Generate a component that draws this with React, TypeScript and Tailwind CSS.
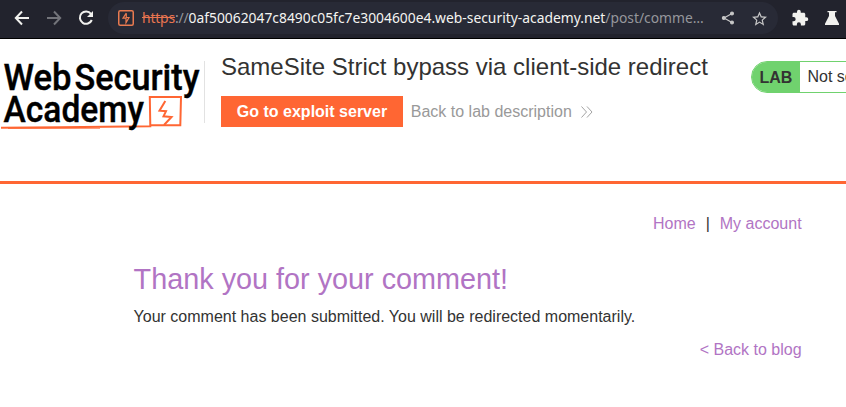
import React from "react";

function BrowserBar() {
  return (
    <div className="flex h-[39px] w-full items-start border-b border-black bg-[#22232d]">
      <div className="flex h-9 w-[108px] shrink-0 items-center pl-[14px] text-[#f1f1ee]">
        <svg className="h-4 w-4 shrink-0" viewBox="0 0 16 16" fill="none" stroke="currentColor" strokeWidth="2">
          <path d="M15 8H2.5M8 1.5 1.8 8 8 14.5" />
        </svg>
        <svg className="ml-4 h-4 w-4 shrink-0 text-[#73747a]" viewBox="0 0 16 16" fill="none" stroke="currentColor" strokeWidth="2">
          <path d="M1 8h12.5M8 1.5 14.2 8 8 14.5" />
        </svg>
        <svg className="ml-4 h-4 w-4 shrink-0" viewBox="0 0 16 16" fill="none" stroke="currentColor" strokeWidth="2">
          <path d="M13 3.8A6.2 6.2 0 1 0 13.8 10" />
          <path d="M15 1v6H9z" fill="currentColor" stroke="none" />
        </svg>
      </div>
      <div className="mt-[2px] flex h-8 w-[670px] shrink-0 items-center rounded-full bg-[#282a36] pl-[10px]">
        <svg className="h-4 w-4 shrink-0" viewBox="0 0 16 16" fill="none" stroke="#e97a50" strokeWidth="1.5">
          <rect x="0.75" y="0.75" width="14.5" height="14.5" rx="1.5" />
          <path d="M8.300 3.200 5 8.200h3M8.300 3.200v4.300M8 7.500h3L8 12.800V8" strokeWidth="1.2" />
        </svg>
        <div className="ml-2 w-[566px] shrink-0 whitespace-nowrap font-['Noto_Sans',sans-serif] text-[13.85px] leading-5 text-[#f4f4f1]">
          <span className="tracking-[-0.15px] text-[#e97550] line-through">https</span>
          <span className="tracking-[-0.15px] text-[#96979c]">://</span>0af50062047c8490c05fc7e3004600e4.web-security-academy.net
          <span className="text-[#96979c]">/post/comme…</span>
        </div>
        <svg className="ml-[13px] h-[14px] w-[14px] shrink-0" viewBox="0 0 14 14" fill="#c7c7c7" stroke="#c7c7c7" strokeWidth="1.2">
          <path d="M11 2.5 3 7l8 4.5" fill="none" />
          <circle cx="11" cy="2.4" r="1.4" />
          <circle cx="2.8" cy="7" r="1.4" />
          <circle cx="11" cy="11.6" r="1.4" />
        </svg>
        <svg className="ml-[17px] h-[15px] w-[15px] shrink-0" viewBox="2 1.5 20 20" fill="#c7c7c7">
          <path d="m22 9.240-7.190-.620L12 2 9.190 8.630 2 9.240l5.460 4.730L5.820 21 12 17.270 18.180 21l-1.630-7.030L22 9.240zM12 15.400l-3.760 2.270 1-4.280-3.320-2.880 4.380-.380L12 6.100l1.710 4.040 4.380.380-3.320 2.880 1 4.280L12 15.400z" />
        </svg>
      </div>
      <svg className="ml-[13px] mt-[9px] h-[18px] w-[18px] shrink-0" viewBox="0 0 24 24" fill="#f1f1ee">
        <path d="M20.500 11H19V7c0-1.100-.900-2-2-2h-4V3.500a2.500 2.500 0 0 0-5 0V5H4c-1.100 0-2 .900-2 2v3.800h1.500a2.700 2.700 0 0 1 0 5.400H2V20c0 1.100.900 2 2 2h3.800v-1.500a2.700 2.700 0 0 1 5.400 0V22H17c1.100 0 2-.900 2-2v-4h1.500a2.500 2.500 0 0 0 0-5z" />
      </svg>
      <svg className="ml-[16px] mt-[11px] h-[14px] w-[14px] shrink-0" viewBox="0 0 14 14" fill="#f1f1ee">
        <path d="M2.500 0h9v1.200h-1.500V5l4 7.800V14H0v-1.200L4 5V1.200H2.500z" />
      </svg>
    </div>
  );
}

function Logo() {
  return (
    <svg className="h-[82px] w-[204px] shrink-0" viewBox="0 53 204 82">
      <g fill="none" stroke="#ff6633">
        <path d="M1 127.800 60 127.300 150.300 126.300 149.800 97H181L180.300 125.200H150" strokeWidth="2" />
        <path d="M8 128.500 100 128.300" strokeWidth=".8" />
        <path d="M165.300 101 159.500 110.700 166 111.200 163.500 116.300 171.500 117 164 125" strokeWidth="2" />
      </g>
      <g fill="#000" stroke="#000" strokeWidth=".4" className="font-['Roboto',sans-serif] text-[36.5px] font-medium">
        <text x="3.500" y="89.500" textLength="68" lengthAdjust="spacingAndGlyphs">Web</text>
        <text x="74.500" y="89.500" textLength="125" lengthAdjust="spacingAndGlyphs">Security</text>
        <text x="3.500" y="122" textLength="140.500" lengthAdjust="spacingAndGlyphs">Academy</text>
      </g>
    </svg>
  );
}

export default function App() {
  return (
    <div className="h-[407px] w-[846px] overflow-hidden bg-white font-['Liberation_Sans',Arial,sans-serif] text-base text-[#333332]">
      <BrowserBar />
      <header className="flex h-[145px] items-start border-b-[3px] border-[#ff6633] pt-[14px]">
        <Logo />
        <div className="mt-[8px] h-[62px] w-px shrink-0 bg-[#e2e2e2]" />
        <div className="ml-4 w-[530px] shrink-0">
          <h1 className="whitespace-nowrap text-[24px] leading-7">SameSite Strict bypass via client-side redirect</h1>
          <div className="mt-[15px] flex items-center">
            <a className="flex h-[31px] w-[182px] items-center justify-center bg-[#ff6633] font-bold text-white">Go to exploit server</a>
            <a className="ml-[7.8px] whitespace-nowrap text-[#999]">Back to lab description</a>
            <svg className="ml-[9px] h-3 w-3" viewBox="0 0 12 12" fill="none" stroke="#999" strokeWidth=".9">
              <path d="m.5.500 5 5.500-5 5.500M6 .5 11 6l-5 5.500" />
            </svg>
          </div>
        </div>
        <div className="mt-[8px] flex h-8 w-[200px] shrink-0 overflow-hidden rounded-l-full border border-[#70d26e]">
          <span className="flex w-[48px] shrink-0 items-center bg-[#70d26e] pl-[7.5px] pt-px font-bold">LAB</span>
          <span className="whitespace-nowrap pl-[7.5px] pt-[3px]">Not solved</span>
        </div>
      </header>
      <main className="ml-[133.6px] w-[668px] pt-[28px]">
        <nav className="flex justify-end leading-6 text-[#b174c4]">
          <a>Home</a>
          <span className="mx-[10px] text-[#333332]">|</span>
          <a>My account</a>
        </nav>
        <h2 className="mt-[25px] text-[28.8px] leading-9 text-[#b174c4]">Thank you for your comment!</h2>
        <p className="mt-[8px] leading-6">Your comment has been submitted. You will be redirected momentarily.</p>
        <div className="mt-[9px] text-right leading-6 text-[#b174c4]">&lt; Back to blog</div>
      </main>
    </div>
  );
}
